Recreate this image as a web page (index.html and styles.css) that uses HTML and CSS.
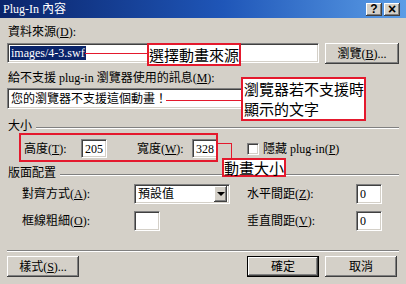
FILE: index.html
```html
<!DOCTYPE html>
<html lang="zh-Hant">

<head>
    <meta charset="UTF-8">
    <title>Plug-In 內容</title>
    <link rel="stylesheet" href="styles.css">
</head>

<body>
    <div class="dialog">
        <!-- 標題列 -->
        <div class="titlebar">
            <span class="title">Plug-In 內容</span>
            <div class="caption-btns">
                <span class="cap-btn">?</span>
                <span class="cap-btn cap-close">×</span>
            </div>
        </div>

        <div class="client">
            <div class="label label-src">資料來源(<u>D</u>):</div>
            <div class="row-src">
                <div class="field field-src"><span class="selected">images/4-3.swf</span></div>
                <div class="btn btn-browse">瀏覽(<u>B</u>)...</div>
            </div>

            <div class="label label-alt">給不支援 plug-in 瀏覽器使用的訊息(<u>M</u>):</div>
            <div class="field field-alt">您的瀏覽器不支援這個動畫！</div>

            <!-- 大小 -->
            <div class="group group-size"><span>大小</span><i class="groove"></i></div>
            <div class="size-row">
                <span class="lbl-height">高度(<u>T</u>):</span>
                <div class="field field-num">205</div>
                <span class="lbl-width">寬度(<u>W</u>):</span>
                <div class="field field-num">328</div>
                <span class="check"></span>
                <span class="check-text">隱藏 plug-in(<u>P</u>)</span>
            </div>

            <!-- 版面配置 -->
            <div class="group group-layout"><span>版面配置</span><i class="groove"></i></div>
            <div class="layout-grid">
                <span>對齊方式(<u>A</u>):</span>
                <div class="field select">
                    <span>預設值</span>
                    <span class="drop-btn"><i class="arrow"></i></span>
                </div>
                <span>水平間距(<u>Z</u>):</span>
                <div class="field field-num">0</div>

                <span>框線粗細(<u>O</u>):</span>
                <div class="field field-num"></div>
                <span>垂直間距(<u>V</u>):</span>
                <div class="field field-num">0</div>
            </div>

            <div class="separator"></div>

            <div class="footer">
                <div class="btn">樣式(<u>S</u>)...</div>
                <div class="footer-right">
                    <div class="btn btn-default">確定</div>
                    <div class="btn">取消</div>
                </div>
            </div>
        </div>

        <!-- 紅色說明標註 -->
        <div class="wire wire-src"></div>
        <div class="note note-src">選擇動畫來源</div>
        <div class="wire wire-alt"></div>
        <div class="note note-alt"><span>瀏覽器若不支援時</span><span>顯示的文字</span></div>
        <div class="note-frame"></div>
        <div class="wire-elbow"></div>
        <div class="note note-size">動畫大小</div>
    </div>
</body>

</html>
```

FILE: styles.css
```css
/* 기본 설정 */
body {
    margin: 0;
    padding: 0;
    background-color: #d4d0c8;
}

u {
    text-decoration-thickness: 1px;
    text-underline-offset: 1px;
}

.dialog {
    position: relative;
    width: 406px;
    height: 284px;
    overflow: hidden;
    background-color: #d4d0c8;
    color: #000;
    font-family: "Liberation Serif", "Noto Sans CJK TC", serif;
    font-size: 12px;
    line-height: 16px;
}

/* 標題列 */
.titlebar {
    display: flex;
    justify-content: space-between;
    align-items: flex-start;
    height: 18px;
    padding: 0 6px 0 3px;
    background: linear-gradient(to right, #0a246a, #1f56b8 55%, #5b9de6);
}

.title {
    color: #fff;
    line-height: 18px;
    font-size: 12px;
}

.caption-btns {
    display: flex;
    gap: 2px;
    padding-top: 3px;
}

.cap-btn {
    width: 16px;
    height: 13px;
    display: flex;
    align-items: center;
    justify-content: center;
    background-color: #d4d0c8;
    box-shadow: inset -1px -1px #404040, inset 1px 1px #fff, inset -2px -2px #808080;
    font-family: "Liberation Sans", sans-serif;
    font-weight: bold;
    font-size: 12px;
    line-height: 13px;
}

.cap-close {
    font-size: 14px;
}

.client {
    padding: 0 7px;
}

.label {
    height: 16px;
    padding-left: 1px;
}

.label-src {
    margin-top: 6px;
}

.label-alt {
    margin-top: 6px;
}

/* 輸入框 (凹陷) */
.field {
    box-sizing: border-box;
    background-color: #fff;
    border: 1px solid;
    border-color: #808080 #fff #fff #808080;
    box-shadow: inset 1px 1px #404040, inset -1px -1px #d4d0c8;
    padding: 1px 0 0 3px;
    line-height: 16px;
}

/* 按鈕 (凸起) */
.btn {
    box-sizing: border-box;
    display: flex;
    align-items: center;
    justify-content: center;
    width: 72px;
    height: 21px;
    background-color: #d4d0c8;
    box-shadow: inset -1px -1px #404040, inset 1px 1px #fff, inset -2px -2px #808080;
}

.btn-default {
    border: 1px solid #000;
}

.row-src {
    display: flex;
    justify-content: space-between;
    margin-top: 3px;
    height: 21px;
}

.field-src {
    width: 312px;
    height: 20px;
    padding-left: 2px;
}

.selected {
    background-color: #0a246a;
    color: #fff;
    padding: 0 1px;
}

.btn-browse {
    width: 74px;
}

.field-alt {
    margin-top: 2px;
    width: 312px;
    height: 21px;
    padding-top: 2px;
}

/* 群組標題 */
.group {
    display: flex;
    align-items: flex-start;
    height: 16px;
    padding-left: 1px;
}

.group-size {
    margin-top: 9px;
}

.group-layout {
    margin-top: 7px;
}

.groove {
    flex: 1;
    height: 0;
    margin: 9px 0 0 4px;
    border-top: 1px solid #808080;
    border-bottom: 1px solid #fff;
}

.size-row {
    display: flex;
    align-items: center;
    margin-top: 5px;
    height: 19px;
    padding-left: 17px;
}

.lbl-height {
    width: 57px;
}

.lbl-width {
    width: 55px;
    margin-left: 30px;
}

.field-num {
    width: 26px;
    height: 19px;
    padding-top: 1px;
}

.check {
    box-sizing: border-box;
    width: 12px;
    height: 12px;
    margin-left: 29px;
    background-color: #fff;
    border: 1px solid;
    border-color: #808080 #fff #fff #808080;
    box-shadow: inset 1px 1px #404040, inset -1px -1px #d4d0c8;
}

.check-text {
    margin-left: 4px;
}

.layout-grid {
    display: grid;
    grid-template-columns: 112px 113px 109px 26px;
    grid-auto-rows: 20px;
    row-gap: 7px;
    align-items: center;
    margin-top: 3px;
    padding-left: 15px;
}

.layout-grid .field-num {
    height: 20px;
}

.select {
    display: flex;
    justify-content: space-between;
    width: 96px;
    height: 20px;
    padding: 0 2px 0 3px;
    align-items: center;
}

.drop-btn {
    display: flex;
    align-items: center;
    justify-content: center;
    width: 13px;
    height: 16px;
    background-color: #d4d0c8;
    box-shadow: inset -1px -1px #404040, inset 1px 1px #fff, inset -2px -2px #808080;
}

.arrow {
    width: 0;
    height: 0;
    border-left: 4px solid transparent;
    border-right: 4px solid transparent;
    border-top: 4px solid #000;
}

.separator {
    margin-top: 19px;
    border-top: 1px solid #808080;
    border-bottom: 1px solid #fff;
}

.footer {
    display: flex;
    justify-content: space-between;
    margin-top: 4px;
    height: 21px;
    padding-right: 2px;
}

.footer-right {
    display: flex;
    gap: 6px;
}

/* 紅色標註 */
.note {
    position: absolute;
    box-sizing: border-box;
    border: 2px solid #e4192d;
    background-color: #fff;
    font-family: "Noto Sans CJK TC", sans-serif;
    font-size: 15px;
    line-height: 15px;
    text-align: center;
}

.note-src {
    left: 147px;
    top: 43px;
    width: 94px;
    height: 23px;
    padding-top: 2px;
}

.note-alt {
    left: 241px;
    top: 77px;
    width: 125px;
    height: 44px;
    display: flex;
    flex-direction: column;
    justify-content: space-between;
    align-items: flex-start;
    padding: 2px 0 3px 1px;
}

.note-size {
    left: 222px;
    top: 158px;
    width: 64px;
    height: 19px;
    padding-top: 0;
}

.note-frame {
    position: absolute;
    left: 19px;
    top: 133px;
    width: 199px;
    height: 29px;
    box-sizing: border-box;
    border: 2px solid #e4192d;
}

.wire {
    position: absolute;
    height: 1px;
    background-color: #e4192d;
}

.wire-src {
    left: 85px;
    top: 53px;
    width: 62px;
}

.wire-alt {
    left: 166px;
    top: 100px;
    width: 75px;
}

.wire-elbow {
    position: absolute;
    left: 218px;
    top: 143px;
    width: 14px;
    height: 15px;
    box-sizing: border-box;
    border-top: 1px solid #e4192d;
    border-right: 1px solid #e4192d;
}
```
